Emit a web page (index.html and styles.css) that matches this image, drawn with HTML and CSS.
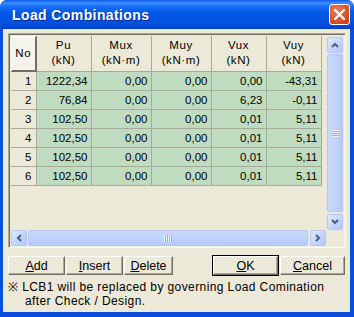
FILE: index.html
```html
<html>
    <head>
        <title>Load Combinations</title>
        <link rel="stylesheet" href="styles.css">
    </head>

    <body>
        <div class="window">
            <div class="titlebar">
                <span class="title">Load Combinations</span>
                <span class="close">
                    <svg width="11" height="11" viewBox="0 0 11 11">
                        <path d="M1 1 L10 10 M10 1 L1 10" stroke="#fff" stroke-width="2.2" stroke-linecap="square" />
                    </svg>
                </span>
            </div>

            <div class="client">
                <!-- grid with scrollbars -->
                <div class="grid">
                    <div class="view">
                        <table class="data">
                            <colgroup>
                                <col style="width: 25px">
                                <col style="width: 55px">
                                <col style="width: 60px">
                                <col style="width: 60px">
                                <col style="width: 55px">
                                <col style="width: 55px">
                            </colgroup>
                            <tr class="head">
                                <th class="corner-head">No</th>
                                <th>Pu<br>(kN)</th>
                                <th>Mux<br>(kN&middot;m)</th>
                                <th>Muy<br>(kN&middot;m)</th>
                                <th>Vux<br>(kN)</th>
                                <th>Vuy<br>(kN)</th>
                            </tr>
                            <tr><td class="num">1</td><td>1222,34</td><td>0,00</td><td>0,00</td><td>0,00</td><td>-43,31</td></tr>
                            <tr><td class="num">2</td><td>76,84</td><td>0,00</td><td>0,00</td><td>6,23</td><td>-0,11</td></tr>
                            <tr><td class="num">3</td><td>102,50</td><td>0,00</td><td>0,00</td><td>0,01</td><td>5,11</td></tr>
                            <tr><td class="num">4</td><td>102,50</td><td>0,00</td><td>0,00</td><td>0,01</td><td>5,11</td></tr>
                            <tr><td class="num">5</td><td>102,50</td><td>0,00</td><td>0,00</td><td>0,01</td><td>5,11</td></tr>
                            <tr><td class="num">6</td><td>102,50</td><td>0,00</td><td>0,00</td><td>0,01</td><td>5,11</td></tr>
                        </table>
                    </div>

                    <div class="vscroll">
                        <div class="arrow">
                            <svg width="8" height="6" viewBox="0 0 8 6"><path d="M1 5 L4 2 L7 5" fill="none" stroke="#4D6185" stroke-width="2" /></svg>
                        </div>
                        <div class="thumb vthumb"><span class="grip-v"></span></div>
                        <div class="arrow">
                            <svg width="8" height="6" viewBox="0 0 8 6"><path d="M1 1 L4 4 L7 1" fill="none" stroke="#4D6185" stroke-width="2" /></svg>
                        </div>
                    </div>

                    <div class="hscroll">
                        <div class="arrow">
                            <svg width="6" height="8" viewBox="0 0 6 8"><path d="M5 1 L2 4 L5 7" fill="none" stroke="#4D6185" stroke-width="2" /></svg>
                        </div>
                        <div class="thumb hthumb"><span class="grip-h"></span></div>
                        <div class="arrow">
                            <svg width="6" height="8" viewBox="0 0 6 8"><path d="M1 1 L4 4 L1 7" fill="none" stroke="#4D6185" stroke-width="2" /></svg>
                        </div>
                    </div>

                    <div class="scorner"></div>
                </div>

                <!-- action buttons -->
                <div class="buttons">
                    <div class="group">
                        <button class="btn w57"><u>A</u>dd</button>
                        <button class="btn w57"><u>I</u>nsert</button>
                        <button class="btn w49"><u>D</u>elete</button>
                    </div>
                    <div class="group gap2">
                        <button class="btn w65 default"><u>O</u>K</button>
                        <button class="btn w65"><u>C</u>ancel</button>
                    </div>
                </div>

                <p class="note">※ LCB1 will be replaced by governing Load Comination<br>after Check / Design.</p>
            </div>
        </div>
    </body>
</html>
```

FILE: styles.css
```css
/* Page */
body {
    margin: 0;
    background-color: #ffffff;
    font-family: "Liberation Sans", Arial, sans-serif;
}

/* Window frame */
.window {
    width: 354px;
    height: 317px;
    box-sizing: border-box;
    display: flex;
    flex-direction: column;
    background-color: #0A4CDB;
    border-radius: 7px 7px 0 0;
    overflow: hidden;
}

/* Title bar */
.titlebar {
    height: 29px;
    flex: none;
    display: flex;
    align-items: center;
    justify-content: space-between;
    padding: 0 4px 0 12px;
    background: linear-gradient(to bottom, #0A5AE8 0%, #3C8FFB 10%, #1A6DF5 22%, #0158E6 45%, #0053E0 75%, #0049D6 92%, #003CC4 100%);
}

.title {
    color: #ffffff;
    font-weight: bold;
    font-size: 14px;
    letter-spacing: 0.4px;
    text-shadow: 1px 1px 0 #0A2A8A;
    padding-top: 1px;
}

/* Close button */
.close {
    width: 19px;
    height: 19px;
    display: flex;
    align-items: center;
    justify-content: center;
    border: 1px solid #ffffff;
    border-radius: 3px;
    background: radial-gradient(circle at 35% 30%, #F08060 0%, #DD5A33 45%, #C53C12 100%);
}

/* Client area */
.client {
    flex: 1;
    margin: 0 4px 5px 3px;
    background-color: #ECE9D8;
    padding: 4px 4px 0 5px;
    display: flex;
    flex-direction: column;
}

/* Grid control */
.grid {
    height: 215px;
    box-sizing: border-box;
    border-top: 1px solid #ACA899;
    border-left: 1px solid #ACA899;
    border-right: 1px solid #ffffff;
    border-bottom: 1px solid #ffffff;
    box-shadow: inset 1px 1px 0 #716F64, inset -1px -1px 0 #F1EFE2;
    padding: 2px 2px 1px 2px;
    display: grid;
    grid-template-columns: 1fr 16px;
    grid-template-rows: 1fr 16px;
    column-gap: 1px;
}

.view {
    overflow: hidden;
}

/* Table inside the grid */
.data {
    border-collapse: collapse;
    table-layout: fixed;
    width: 310px;
    font-size: 11.5px;
    color: #000000;
}

.data th,
.data td {
    border: 1px solid #ACA899;
    padding: 0;
}

.data tr:first-child th {
    border-top: none;
}

.data tr th:first-child,
.data tr td:first-child {
    border-left: none;
}

.data th {
    height: 35px;
    font-weight: normal;
    text-align: center;
    line-height: 15px;
    background-color: #ECE9D8;
    letter-spacing: 0.6px;
}

.data th.corner-head {
    background-color: #F4F3EC;
    box-shadow: inset 1px 1px 0 #ffffff, inset -1px -1px 0 #716F64;
    border-color: #716F64;
}

.data td {
    height: 19px;
    text-align: right;
    padding-right: 3px;
    background-color: #C0DCC0;
}

.data td.num {
    background-color: #ECE9D8;
    padding-right: 4px;
}

/* Scrollbars */
.vscroll {
    display: flex;
    flex-direction: column;
    gap: 1px;
    padding-top: 1px;
}

.hscroll {
    display: flex;
    gap: 1px;
}

.arrow {
    width: 16px;
    height: 16px;
    box-sizing: border-box;
    flex: none;
    display: flex;
    align-items: center;
    justify-content: center;
    border: 1px solid #B4C8F6;
    border-radius: 2px;
    background: linear-gradient(135deg, #E1EAFE 0%, #C4D5FC 55%, #B2C6F7 100%);
}

.thumb {
    flex: 1;
    box-sizing: border-box;
    display: flex;
    align-items: center;
    justify-content: center;
    border: 1px solid #B4C8F6;
    border-radius: 2px;
}

.vthumb {
    background: linear-gradient(to right, #CADAFE 0%, #C1D3FD 50%, #B6CAF8 100%);
    margin-bottom: 1px;
}

.hthumb {
    background: linear-gradient(to bottom, #CADAFE 0%, #C1D3FD 50%, #B6CAF8 100%);
    margin-right: 1px;
}

.grip-v {
    width: 7px;
    height: 7px;
    background: repeating-linear-gradient(to bottom, #EEF4FE 0, #EEF4FE 1px, #8CB0F8 1px, #8CB0F8 2px);
}

.grip-h {
    width: 8px;
    height: 7px;
    background: repeating-linear-gradient(to right, #EEF4FE 0, #EEF4FE 1px, #8CB0F8 1px, #8CB0F8 2px);
}

.scorner {
    background-color: #ECE9D8;
}

/* Buttons row */
.buttons {
    display: flex;
    justify-content: space-between;
    margin-top: 8px;
    padding-right: 1px;
}

.group {
    display: flex;
    gap: 1px;
}

.gap2 {
    gap: 2px;
}

.btn {
    height: 19px;
    padding: 0;
    font-family: "Liberation Sans", Arial, sans-serif;
    font-size: 12.5px;
    color: #000000;
    background-color: #ECE9D8;
    border-top: 1px solid #ffffff;
    border-left: 1px solid #ffffff;
    border-right: 1px solid #716F64;
    border-bottom: 1px solid #716F64;
    box-shadow: inset -1px -1px 0 #ACA899;
    border-radius: 0;
}

.btn.default {
    outline: 1px solid #000000;
    outline-offset: 0;
}

.w57 { width: 57px; }
.w49 { width: 49px; }
.w65 { width: 65px; }

/* Footnote */
.note {
    margin: 5px 0 0 0;
    padding-left: 17px;
    text-indent: -17px;
    font-size: 12px;
    line-height: 14px;
    letter-spacing: 0.4px;
    color: #000000;
}
```
